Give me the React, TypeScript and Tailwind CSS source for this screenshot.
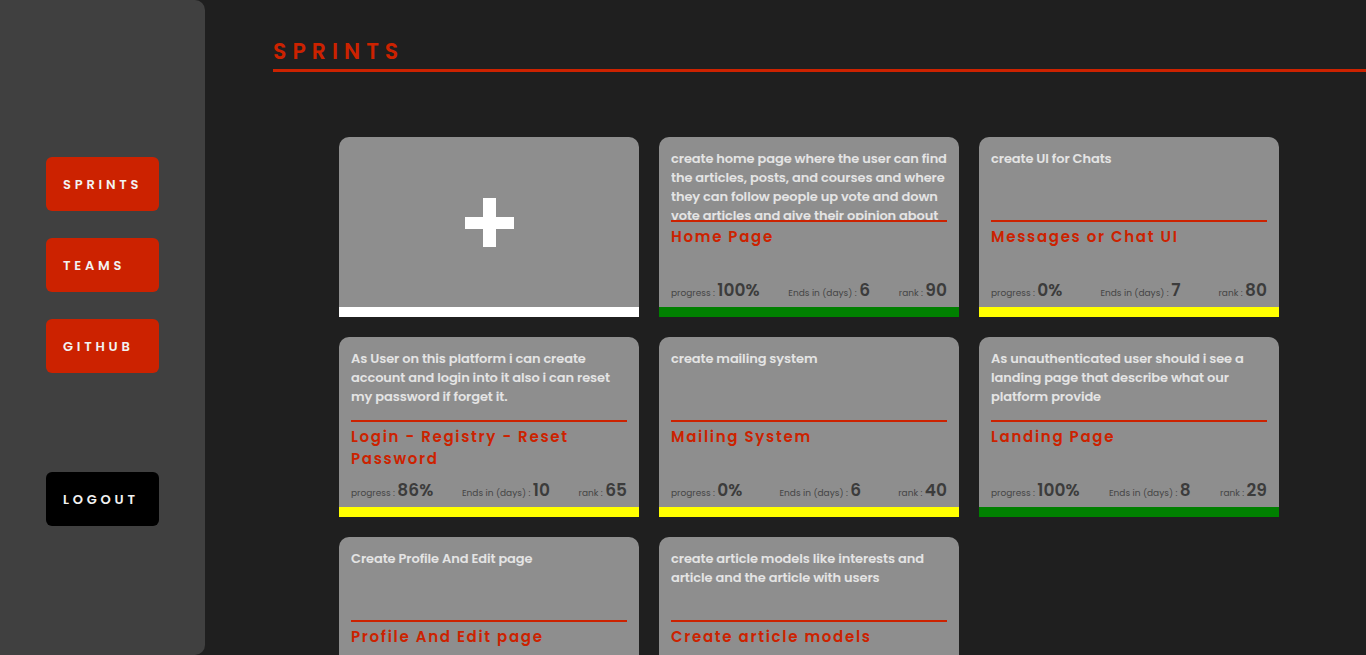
import React from 'react';

type Sprint = {
  description: string;
  title: string;
  progress: number;
  ends: number;
  rank: number;
};

const sprints: Sprint[] = [
  {
    description:
      'create home page where the user can find the articles, posts, and courses and where they can follow people up vote and down vote articles and give their opinion about it',
    title: 'Home Page',
    progress: 100,
    ends: 6,
    rank: 90,
  },
  { description: 'create UI for Chats', title: 'Messages or Chat UI', progress: 0, ends: 7, rank: 80 },
  {
    description: 'As User on this platform i can create account and login into it also i can reset my password if forget it.',
    title: 'Login - Registry - Reset Password',
    progress: 86,
    ends: 10,
    rank: 65,
  },
  { description: 'create mailing system', title: 'Mailing System', progress: 0, ends: 6, rank: 40 },
  {
    description: 'As unauthenticated user should i see a landing page that describe what our platform provide',
    title: 'Landing Page',
    progress: 100,
    ends: 8,
    rank: 29,
  },
  { description: 'Create Profile And Edit page', title: 'Profile And Edit page', progress: 20, ends: 5, rank: 20 },
  {
    description: 'create article models like interests and article and the article with users',
    title: 'Create article models',
    progress: 50,
    ends: 4,
    rank: 15,
  },
];

const font = { fontFamily: '"Poppins", "Open Sans", sans-serif' };

const SideButton: React.FC<{ label: string; dark?: boolean }> = ({ label, dark }) => (
  <button
    className={`w-[113px] h-[54px] rounded-md pl-[17px] pt-[2px] text-left text-[13px] font-semibold tracking-[3.8px] text-[#f2f2f2] ${
      dark ? 'bg-black' : 'bg-[#cc2200]'
    }`}
  >
    {label}
  </button>
);

const SprintCard: React.FC<{ sprint: Sprint }> = ({ sprint }) => {
  const barColor = sprint.progress === 100 ? 'bg-[#008000]' : 'bg-[#ffff00]';
  return (
    <div className="w-[300px] h-[180px] flex flex-col rounded-t-[10px] bg-[#8e8e8e] overflow-hidden">
      <div className="flex-1 flex flex-col px-3 pt-[12px] pb-[4px]">
        <div className="h-[73px] overflow-hidden border-b-2 border-[#cc2200]">
          <p className="text-[13px] leading-[19px] font-semibold tracking-[-0.1px] text-[#e4e4e4]">{sprint.description}</p>
        </div>
        <h3 className="mt-[4px] text-[15px] leading-[22px] font-semibold tracking-[1.7px] text-[#cc2200]">
          {sprint.title}
        </h3>
        <div className="mt-auto flex items-baseline justify-between text-[#454545]">
          <span className="text-[9px]">
            progress : <span className="text-[17px] font-semibold text-[#3c3c3c]">{sprint.progress}%</span>
          </span>
          <span className="text-[9px]">
            Ends in (days) : <span className="text-[17px] font-semibold text-[#3c3c3c]">{sprint.ends}</span>
          </span>
          <span className="text-[9px]">
            rank : <span className="text-[17px] font-semibold text-[#3c3c3c]">{sprint.rank}</span>
          </span>
        </div>
      </div>
      <div className={`h-[10px] ${barColor}`} />
    </div>
  );
};

const AddCard: React.FC = () => (
  <div className="w-[300px] h-[180px] flex flex-col rounded-t-[10px] bg-[#8e8e8e] overflow-hidden">
    <div className="flex-1 flex items-center justify-center">
      <div className="relative w-[49px] h-[49px]">
        <div className="absolute left-[18px] top-0 w-[13px] h-[49px] bg-white" />
        <div className="absolute left-0 top-[19px] w-[49px] h-[12px] bg-white" />
      </div>
    </div>
    <div className="h-[10px] bg-white" />
  </div>
);

const App: React.FC = () => {
  return (
    <div className="min-h-screen flex bg-[#1f1f1f]" style={font}>
      <aside className="sticky top-0 h-screen w-[205px] shrink-0 bg-[#404040] rounded-r-[10px] flex flex-col pl-[46px] pt-[157px]">
        <div className="flex flex-col gap-[27px]">
          <SideButton label="SPRINTS" />
          <SideButton label="TEAMS" />
          <SideButton label="GITHUB" />
        </div>
        <div className="mt-[99px]">
          <SideButton label="LOGOUT" dark />
        </div>
      </aside>

      <main className="flex-1 pl-[68px] pt-[36px] pb-10">
        <h1 className="text-[22px] leading-[32px] font-semibold tracking-[6px] text-[#cc2200] border-b-[3px] border-[#cc2200] pb-[1px]">
          SPRINTS
        </h1>
        <div className="ml-[66px] mt-[65px] grid grid-cols-[repeat(3,300px)] gap-[20px]">
          <AddCard />
          {sprints.map((s) => (
            <SprintCard key={s.title} sprint={s} />
          ))}
        </div>
      </main>
    </div>
  );
};

export default App;
